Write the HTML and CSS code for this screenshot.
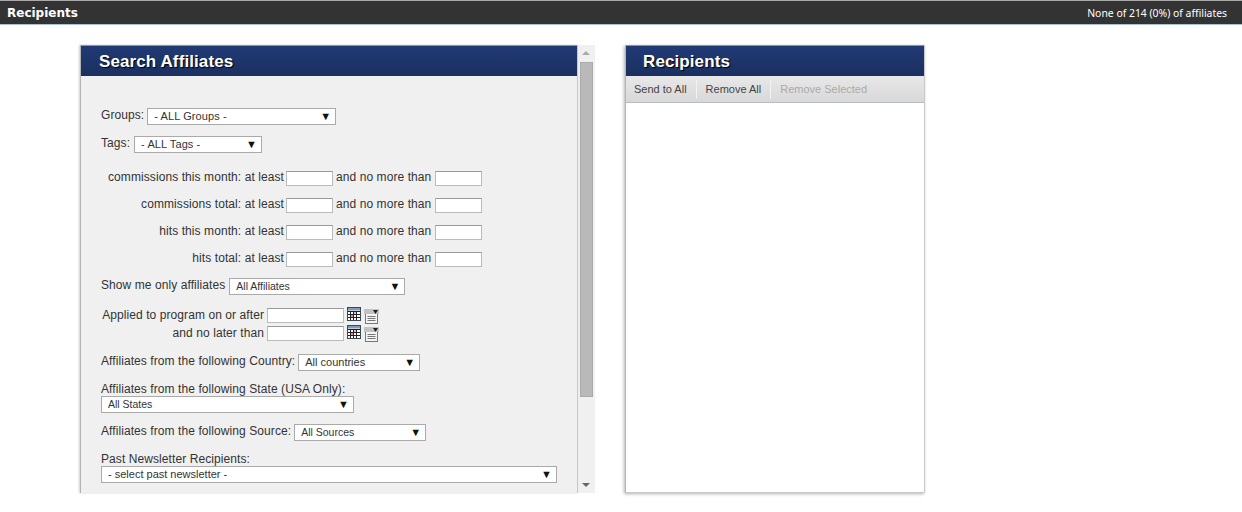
FILE: index.html
```html
<!DOCTYPE html>
<html lang="en">
<head>
  <meta charset="UTF-8">
  <title>Recipients</title>
  <link rel="stylesheet" href="styles.css">
</head>
<body>
  <div class="topbar">
    <span class="topbar-title">Recipients</span>
    <span class="topbar-count">None of 214 (0%) of affiliates</span>
  </div>

  <div class="columns">
    <div class="search-wrap">
      <div class="panel search-panel">
        <h2 class="panel-head">Search Affiliates</h2>
        <div class="search-form">
          <div class="row row-groups">
            <label>Groups:</label>
            <div class="select w-groups">- ALL Groups -<span class="arrow">▼</span></div>
          </div>
          <div class="row row-tags">
            <label>Tags:</label>
            <div class="select w-tags">- ALL Tags -<span class="arrow">▼</span></div>
          </div>

          <div class="range first">
            <label>commissions this month: at least</label>
            <input type="text">
            <span>and no more than</span>
            <input type="text">
          </div>
          <div class="range">
            <label>commissions total: at least</label>
            <input type="text">
            <span>and no more than</span>
            <input type="text">
          </div>
          <div class="range">
            <label>hits this month: at least</label>
            <input type="text">
            <span>and no more than</span>
            <input type="text">
          </div>
          <div class="range">
            <label>hits total: at least</label>
            <input type="text">
            <span>and no more than</span>
            <input type="text">
          </div>

          <div class="row row-show">
            <label>Show me only affiliates</label>
            <div class="select w-show">All Affiliates<span class="arrow">▼</span></div>
          </div>

          <div class="date first">
            <label>Applied to program on or after</label>
            <input type="text">
            <svg class="cal" width="14" height="14" viewBox="0 0 14 14">
              <rect x="0.5" y="0.5" width="13" height="13" fill="#fff" stroke="#3a4a50"/>
              <rect x="1" y="1" width="12" height="2.5" fill="#7c9cb8"/>
              <path d="M1 4.5h12M1 7.5h12M1 10.5h12M3.5 4v9M6.5 4v9M9.5 4v9" stroke="#222" fill="none"/>
              <rect x="4" y="8" width="2" height="2" fill="#e88aa0"/>
              <rect x="7" y="5" width="2" height="2" fill="#f0b8c4"/>
            </svg>
            <svg class="list" width="15" height="15" viewBox="0 0 15 15">
              <rect x="1.5" y="4.5" width="12" height="10" fill="#f4f4f4" stroke="#777"/>
              <rect x="0" y="0" width="15" height="5" fill="#c2c2c2"/>
              <path d="M9 1h5l-2.5 4z" fill="#222"/>
              <path d="M3.5 7.5h8M3.5 9.5h8M3.5 11.5h8" stroke="#777" fill="none"/>
            </svg>
          </div>
          <div class="date">
            <label>and no later than</label>
            <input type="text">
            <svg class="cal" width="14" height="14" viewBox="0 0 14 14">
              <rect x="0.5" y="0.5" width="13" height="13" fill="#fff" stroke="#3a4a50"/>
              <rect x="1" y="1" width="12" height="2.5" fill="#7c9cb8"/>
              <path d="M1 4.5h12M1 7.5h12M1 10.5h12M3.5 4v9M6.5 4v9M9.5 4v9" stroke="#222" fill="none"/>
              <rect x="4" y="8" width="2" height="2" fill="#e88aa0"/>
              <rect x="7" y="5" width="2" height="2" fill="#f0b8c4"/>
            </svg>
            <svg class="list" width="15" height="15" viewBox="0 0 15 15">
              <rect x="1.5" y="4.5" width="12" height="10" fill="#f4f4f4" stroke="#777"/>
              <rect x="0" y="0" width="15" height="5" fill="#c2c2c2"/>
              <path d="M9 1h5l-2.5 4z" fill="#222"/>
              <path d="M3.5 7.5h8M3.5 9.5h8M3.5 11.5h8" stroke="#777" fill="none"/>
            </svg>
          </div>

          <div class="row row-country">
            <label>Affiliates from the following Country:</label>
            <div class="select w-country">All countries<span class="arrow">▼</span></div>
          </div>
          <div class="stack row-state">
            <label>Affiliates from the following State (USA Only):</label>
            <div class="select w-state">All States<span class="arrow">▼</span></div>
          </div>
          <div class="row row-source">
            <label>Affiliates from the following Source:</label>
            <div class="select w-source">All Sources<span class="arrow">▼</span></div>
          </div>
          <div class="stack row-past">
            <label>Past Newsletter Recipients:</label>
            <div class="select w-past">- select past newsletter -<span class="arrow">▼</span></div>
          </div>
        </div>
      </div>

      <div class="scrollbar">
        <span class="scroll-up"></span>
        <div class="scroll-track"><div class="scroll-thumb"></div></div>
        <span class="scroll-down"></span>
      </div>
    </div>

    <div class="panel recipients-panel">
      <h2 class="panel-head">Recipients</h2>
      <div class="toolbar">
        <a class="tool">Send to All</a>
        <a class="tool">Remove All</a>
        <a class="tool disabled">Remove Selected</a>
      </div>
      <div class="recipients-list"></div>
    </div>
  </div>
</body>
</html>
```

FILE: styles.css
```css
body {
  margin: 0;
  font-family: "Liberation Sans", Arial, sans-serif;
  font-size: 12px;
  letter-spacing: 0.08px;
  color: #333;
  background: #fff;
  height: 512px;
  overflow: hidden;
}
.topbar {
  height: 23px;
  display: flex;
  justify-content: space-between;
  align-items: center;
  padding: 0 15px 0 7px;
  background: #333;
  color: #fff;
  border-top: 1px solid #aaa;
  border-bottom: 1px solid #a9c4d8;
  letter-spacing: 0;
}
.topbar-title {
  font-family: "DejaVu Sans", sans-serif;
  font-size: 12px;
  font-weight: bold;
}
.topbar-count {
  font-family: "Noto Sans", sans-serif;
  font-size: 10.4px;
}
.columns {
  display: flex;
  align-items: flex-start;
  gap: 30px;
  margin: 20px 0 0 80px;
}
.search-wrap {
  display: flex;
  height: 448px;
  width: 515px;
  background: #f0f0f0;
}
.panel {
  box-sizing: border-box;
  border-left: 1px solid #b4b4b4;
  box-shadow: -1px 1px 3px rgba(0, 0, 0, 0.3);
}
.search-panel {
  width: 498px;
  height: 448px;
  overflow: hidden;
  background: #f0f0f0;
  border-right: 1px solid #c8c8c8;
  box-shadow: -1px 0 2px rgba(0, 0, 0, 0.2);
}
.panel-head {
  margin: 0;
  height: 31px;
  box-sizing: border-box;
  line-height: 31px;
  padding-left: 18px;
  font-size: 17px;
  letter-spacing: 0.1px;
  font-weight: bold;
  color: #fff;
  text-shadow: 1px 1px 1px #000;
  background: linear-gradient(#213a76, #1b2f60);
  border-top: 1px solid #8a96a8;
}
.search-form {
  padding: 32px 0 0 20px;
}
.row {
  display: flex;
  align-items: center;
  gap: 3px;
}
.row label {
  position: relative;
  top: -2px;
}
.row-tags, .row-show {
  gap: 4px;
}
.row-tags, .row-show, .row-source { margin-top: 11px; }
.row-country { margin-top: 13px; }
.row-state, .row-past { margin-top: 11px; }
.stack {
  display: flex;
  flex-direction: column;
}
.stack label { line-height: 14px; }
.select {
  box-sizing: border-box;
  height: 17px;
  line-height: 15px;
  padding-left: 6px;
  background: #fff;
  border: 1px solid #aaa;
  font-size: 11px;
  position: relative;
  letter-spacing: 0;
}
.arrow {
  position: absolute;
  top: 0;
  right: 4px;
  font-size: 11px;
  color: #111;
}
.w-groups { width: 189px; letter-spacing: 0.1px; }
.w-tags { width: 128px; letter-spacing: 0.1px; }
.w-show { width: 176px; font-size: 10.5px; }
.w-country { width: 122px; }
.w-state { width: 253px; font-size: 10.5px; }
.w-source { width: 132px; font-size: 10.5px; }
.w-past { width: 456px; }
input {
  box-sizing: border-box;
  height: 15px;
  padding: 0;
  background: #fff;
  border: 1px solid #bbb;
  border-top-color: #999;
}
.range {
  display: flex;
  align-items: center;
  height: 15px;
  margin-top: 12px;
}
.range.first { margin-top: 18px; }
.range label {
  width: 183px;
  text-align: right;
  margin-right: 2px;
  position: relative;
  top: -2px;
  white-space: nowrap;
}
.range span {
  margin: 0 4px 0 3px;
  position: relative;
  top: -2px;
}
.range input {
  width: 47px;
}
.date {
  display: flex;
  align-items: center;
  height: 15px;
  margin-top: 3px;
}
.date.first { margin-top: 13px; }
.date label {
  width: 163px;
  text-align: right;
  margin-right: 3px;
  position: relative;
  top: -1px;
  white-space: nowrap;
}
.date input {
  width: 77px;
}
.cal { margin: -4px 0 0 3px; }
.list { margin: 2px 0 0 3px; }
.scrollbar {
  width: 17px;
  height: 448px;
  position: relative;
}
.scroll-track {
  position: absolute;
  top: 17px;
  left: 2px;
  width: 13px;
}
.scroll-thumb {
  height: 335px;
  background: #b9b9b9;
  border: 1px solid #aaa;
  box-sizing: border-box;
}
.scroll-up, .scroll-down {
  position: absolute;
  left: 4px;
  border-left: 4px solid transparent;
  border-right: 4px solid transparent;
}
.scroll-up {
  top: 6px;
  border-bottom: 4px solid #aaa;
}
.scroll-down {
  bottom: 6px;
  border-top: 4px solid #666;
}
.recipients-panel {
  width: 300px;
  height: 448px;
  background: #fff;
  border-right: 1px solid #c8c8c8;
  border-bottom: 1px solid #c8c8c8;
}
.recipients-panel .panel-head {
  padding-left: 17px;
}
.toolbar {
  display: flex;
  align-items: center;
  height: 27px;
  padding-left: 8px;
  box-sizing: border-box;
  background: linear-gradient(#e8e8e8, #d8d8d8);
  border-bottom: 1px solid #b8bcc4;
  font-size: 11px;
  letter-spacing: 0;
}
.tool {
  padding: 0 9px;
  line-height: 19px;
  color: #444;
  border-right: 1px solid #f2f2f2;
}
.tool:first-child {
  padding-left: 0;
}
.tool.disabled {
  color: #aaa;
  border-right: 0;
}
.recipients-list {
  height: 389px;
}
```
